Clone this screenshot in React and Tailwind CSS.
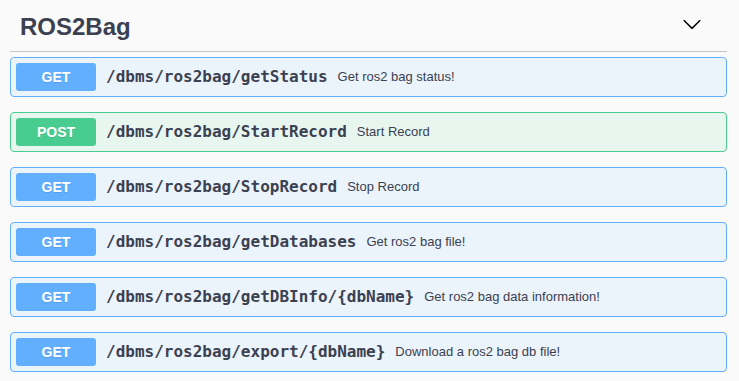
import React from "react";

const ops = [
  { m: "GET", path: "/dbms/ros2bag/getStatus", desc: "Get ros2 bag status!" },
  { m: "POST", path: "/dbms/ros2bag/StartRecord", desc: "Start Record" },
  { m: "GET", path: "/dbms/ros2bag/StopRecord", desc: "Stop Record" },
  { m: "GET", path: "/dbms/ros2bag/getDatabases", desc: "Get ros2 bag file!" },
  { m: "GET", path: "/dbms/ros2bag/getDBInfo/{dbName}", desc: "Get ros2 bag data information!" },
  { m: "GET", path: "/dbms/ros2bag/export/{dbName}", desc: "Download a ros2 bag db file!" },
];

function Op({ m, path, desc }) {
  const post = m === "POST";
  return (
    <div
      className={
        "flex items-center h-[40px] p-[5px] rounded-[4px] border mb-[15px] " +
        (post ? "border-[#49cc90] bg-[#e8f6f0]" : "border-[#61affe] bg-[#ebf3fb]")
      }
    >
      <div
        className={
          "w-[80px] h-[28px] rounded-[3px] flex items-center justify-center text-white font-bold text-[14px] [text-shadow:0_1px_0_rgba(0,0,0,0.1)] " +
          (post ? "bg-[#49cc90]" : "bg-[#61affe]")
        }
        style={{ fontFamily: '"Liberation Sans", Arial, sans-serif' }}
      >
        {m}
      </div>
      <span
        className="px-[10px] text-[16px] font-bold text-[#3b4151]"
        style={{ fontFamily: '"DejaVu Sans Mono", monospace' }}
      >
        {path}
      </span>
      <span
        className="text-[13px] text-[#3b4151]"
        style={{ fontFamily: '"Liberation Sans", Arial, sans-serif' }}
      >
        {desc}
      </span>
    </div>
  );
}

export default function App() {
  return (
    <div
      className="min-h-[381px] bg-[#fafafa] pl-[10px] pr-[12px]"
      style={{ fontFamily: '"Liberation Sans", Arial, sans-serif' }}
    >
      <div className="flex items-start justify-between h-[52px] border-b border-[#c4c6ca] mb-[5px]">
        <h4 className="mt-[13px] ml-[10px] text-[24px] leading-[28px] font-bold text-[#3b4151]">
          ROS2Bag
        </h4>
        <svg
          className="mt-[14px] mr-[25px]"
          width="20"
          height="20"
          viewBox="0 0 20 20"
        >
          <path
            fill="#000"
            d="M17.418 6.109c.272-.268.709-.268.979 0s.271.701 0 .969l-7.908 7.83c-.27.268-.707.268-.979 0l-7.908-7.83c-.27-.268-.27-.701 0-.969.271-.268.709-.268.979 0L10 13.25l7.418-7.141z"
          />
        </svg>
      </div>
      {ops.map((o, i) => (
        <Op key={i} {...o} />
      ))}
    </div>
  );
}
